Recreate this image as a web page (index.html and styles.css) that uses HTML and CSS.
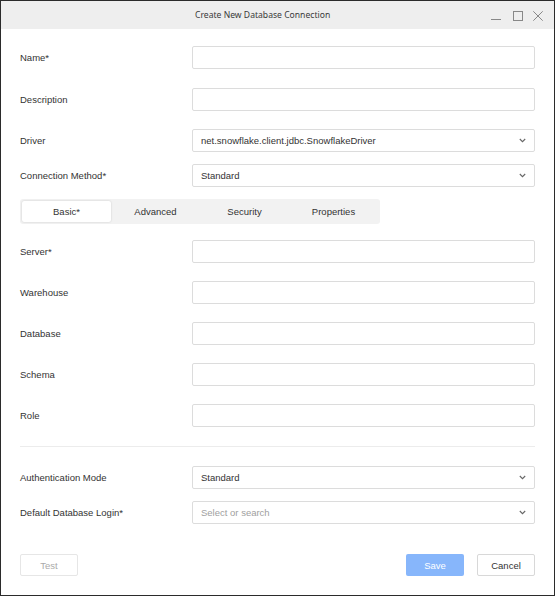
FILE: index.html
```html
<!DOCTYPE html>
<html>
<head>
<meta charset="utf-8">
<link rel="stylesheet" href="styles.css">
</head>
<body>
<div class="window">
  <div class="titlebar">
    <div class="title">Create New Database Connection</div>
    <div class="controls">
      <svg class="ctl" width="10" height="10" viewBox="0 0 10 10"><path d="M0 8.5H10" stroke="#888" stroke-width="1" fill="none"/></svg>
      <svg class="ctl" width="10" height="10" viewBox="0 0 10 10"><rect x="0.5" y="0.5" width="9" height="9" stroke="#888" stroke-width="1" fill="none"/></svg>
      <svg class="ctl" width="10" height="10" viewBox="0 0 10 10"><path d="M0.3 0.3L9.7 9.7M9.7 0.3L0.3 9.7" stroke="#888" stroke-width="1" fill="none"/></svg>
    </div>
  </div>
  <div class="content">
    <div class="row r-name"><label>Name*</label><div class="input"></div></div>
    <div class="row r-desc"><label>Description</label><div class="input"></div></div>
    <div class="row r-driver"><label>Driver</label><div class="input select"><span>net.snowflake.client.jdbc.SnowflakeDriver</span><svg class="chev" width="7" height="5" viewBox="0 0 7 5"><path d="M0.8 1L3.5 3.7L6.2 1" stroke="#666" stroke-width="1.1" fill="none"/></svg></div></div>
    <div class="row r-conn"><label>Connection Method*</label><div class="input select"><span>Standard</span><svg class="chev" width="7" height="5" viewBox="0 0 7 5"><path d="M0.8 1L3.5 3.7L6.2 1" stroke="#666" stroke-width="1.1" fill="none"/></svg></div></div>
    <div class="tabs">
      <div class="tab active">Basic*</div>
      <div class="tab">Advanced</div>
      <div class="tab">Security</div>
      <div class="tab">Properties</div>
    </div>
    <div class="row r-server"><label>Server*</label><div class="input"></div></div>
    <div class="row r-std"><label>Warehouse</label><div class="input"></div></div>
    <div class="row r-std"><label>Database</label><div class="input"></div></div>
    <div class="row r-std"><label>Schema</label><div class="input"></div></div>
    <div class="row r-std"><label>Role</label><div class="input"></div></div>
    <div class="divider"></div>
    <div class="row r-auth"><label>Authentication Mode</label><div class="input select"><span>Standard</span><svg class="chev" width="7" height="5" viewBox="0 0 7 5"><path d="M0.8 1L3.5 3.7L6.2 1" stroke="#666" stroke-width="1.1" fill="none"/></svg></div></div>
    <div class="row r-login"><label>Default Database Login*</label><div class="input select"><span class="ph">Select or search</span><svg class="chev" width="7" height="5" viewBox="0 0 7 5"><path d="M0.8 1L3.5 3.7L6.2 1" stroke="#666" stroke-width="1.1" fill="none"/></svg></div></div>
    <div class="footer">
      <div class="btn test">Test</div>
      <div class="spacer"></div>
      <div class="btn save">Save</div>
      <div class="btn cancel">Cancel</div>
    </div>
  </div>
</div>
</body>
</html>
```
FILE: styles.css
```css
html, body {
  margin: 0;
  padding: 0;
  background: #fff;
}
.window {
  width: 555px;
  height: 596px;
  box-sizing: border-box;
  border: 1px solid #2b2b2b;
  background: #fff;
  font-family: "Liberation Sans", Arial, sans-serif;
  font-size: 9.5px;
  color: #333;
  display: flex;
  flex-direction: column;
}
.titlebar {
  height: 28px;
  background: #eeeeee;
  position: relative;
  display: flex;
  align-items: center;
  flex-shrink: 0;
}
.title {
  margin-left: 194px;
  font-family: "Noto Sans", "Open Sans", sans-serif;
  font-size: 8.6px;
  color: #3a3a3a;
}
.controls {
  position: absolute;
  right: 11px;
  top: 10px;
  display: flex;
}
.ctl { display: block; }
.ctl + .ctl { margin-left: 12px; }
.ctl + .ctl + .ctl { margin-left: 10px; }
.content {
  padding: 0 19px 0 19px;
  display: flex;
  flex-direction: column;
}
.row {
  display: flex;
  align-items: center;
  height: 23px;
}
.row label {
  width: 172px;
  flex-shrink: 0;
}
.input {
  flex: 1;
  height: 23px;
  box-sizing: border-box;
  border: 1px solid #dcdcdc;
  border-radius: 2px;
  background: #fff;
  display: flex;
  align-items: center;
  padding: 0 8px;
}
.select { justify-content: space-between; }
.ph { color: #a0a0a0; }
.r-name { margin-top: 17px; }
.r-desc { margin-top: 19px; }
.r-driver { margin-top: 18px; }
.r-conn { margin-top: 12px; }
.tabs {
  margin-top: 12px;
  width: 360px;
  height: 25px;
  box-sizing: border-box;
  background: #f2f2f2;
  border-radius: 3px;
  padding: 2px;
  display: flex;
}
.tab {
  width: 89px;
  display: flex;
  align-items: center;
  justify-content: center;
  color: #333;
  border-radius: 2px;
}
.tab.active {
  background: #fff;
  box-shadow: 0 0 2px rgba(0,0,0,0.18);
}
.r-server { margin-top: 16px; }
.r-std { margin-top: 18px; }
.divider {
  margin-top: 19px;
  height: 1px;
  background: #ececec;
}
.r-auth { margin-top: 19px; }
.r-login { margin-top: 12px; }
.footer {
  margin-top: 30px;
  display: flex;
  height: 22px;
}
.spacer { flex: 1; }
.btn {
  width: 58px;
  height: 22px;
  box-sizing: border-box;
  border-radius: 2px;
  display: flex;
  align-items: center;
  justify-content: center;
}
.test {
  border: 1px solid #e6e6e6;
  color: #aaa;
}
.save {
  background: #87b6fb;
  color: #fff;
  margin-right: 13px;
}
.cancel {
  border: 1px solid #d8d8d8;
  color: #333;
}
```
